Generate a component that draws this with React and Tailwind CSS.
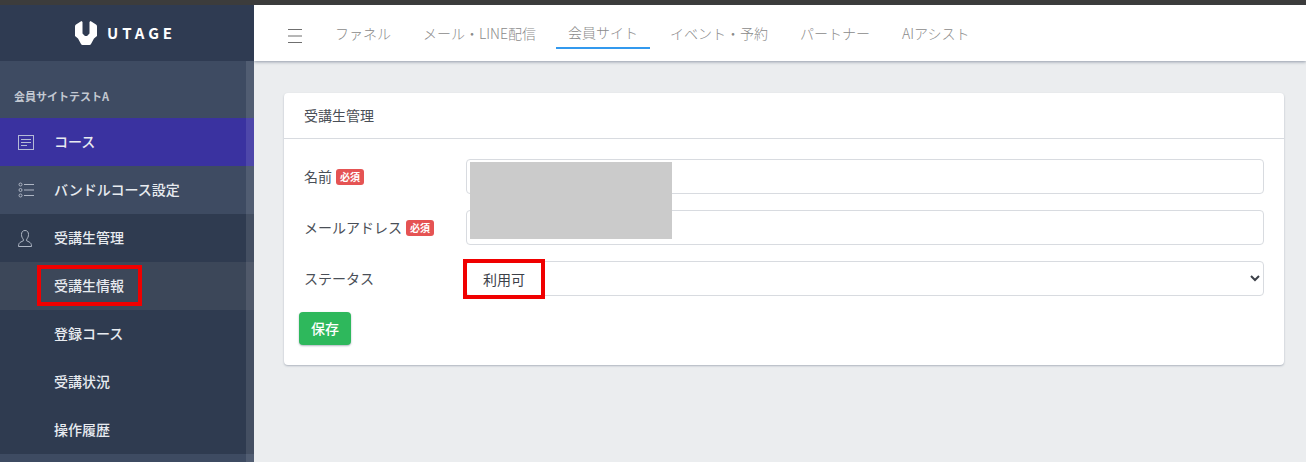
const font = { fontFamily: '"Noto Sans CJK JP", sans-serif' };

function LogoMark() {
  return (
    <svg width="22" height="24" viewBox="0 0 22 24" fill="#ffffff">
      <path d="M6.500 0 L7.500 1 L7.500 12.500 L10 15 L12 15 L14.500 12.500 L14.500 1 L15.500 0 L21 3.500 Q22 4.200 22 5.500 L22 15 L19 17.500 L16 23 Q15.500 24 14.500 24 L7.500 24 Q6.500 24 6 23 L3 17.500 L0 15 L0 5.500 Q0 4.200 1 3.500 Z" />
    </svg>
  );
}

function DocIcon() {
  return (
    <svg width="16" height="15" viewBox="0 0 16 15" fill="none" stroke="#b4bad6" strokeWidth="1">
      <rect x="0.5" y="0.5" width="15" height="14" />
      <path d="M3 4.500h10M3 7.500h10M3 10.500h6" />
    </svg>
  );
}

function ListIcon() {
  return (
    <svg width="16" height="16" viewBox="0 0 16 16" fill="none" stroke="#aeb6c4" strokeWidth="1">
      <circle cx="2.500" cy="2.500" r="1.500" />
      <circle cx="2.500" cy="8" r="1.500" />
      <circle cx="2.500" cy="13.500" r="1.500" />
      <path d="M6 2.500h10M6 8h10M6 13.500h10" />
    </svg>
  );
}

function UserIcon() {
  return (
    <svg width="14" height="17" viewBox="0 0 14 17" fill="none" stroke="#aeb6c4" strokeWidth="1">
      <path d="M7 0.500c-2.400 0-3.500 1.700-3.500 4 0 2 .7 3.600 1.800 4.600v1.800c-1.400.6-3.500 1.400-4.100 2.400-.4.600-.7 1.800-.7 3.200h13c0-1.400-.3-2.600-.7-3.200-.6-1-2.700-1.800-4.100-2.400V9.100c1.100-1 1.800-2.600 1.800-4.600 0-2.300-1.100-4-3.500-4z" />
    </svg>
  );
}

function Hamburger() {
  return (
    <svg width="14" height="14" viewBox="0 0 14 14" stroke="#6f6f6f" strokeWidth="1" className="mt-[5px]">
      <path d="M0 0.500h14M0 7h14M0 13.500h14" />
    </svg>
  );
}

function SideRow({ icon, label, className = "" }) {
  return (
    <div className={`h-12 flex items-center text-[14px] font-medium text-[#e8ebf0] ${className}`}>
      <div className="w-[54px] pl-[18px] flex items-center">{icon}</div>
      <span className="pb-[2px]">{label}</span>
    </div>
  );
}

function Required() {
  return (
    <span className="ml-1 px-[4px] h-4 inline-flex items-center rounded-[3px] bg-[#e55353] text-white text-[10px] font-bold">
      必須
    </span>
  );
}

function FormRow({ label, required, children }) {
  return (
    <div className="flex items-center h-[35px]">
      <div className="w-[162px] text-[14px] text-[#4a4f57] flex items-center">
        {label}
        {required && <Required />}
      </div>
      <div className="flex-1">{children}</div>
    </div>
  );
}

const navItems = ["ファネル", "メール・LINE配信", "会員サイト", "イベント・予約", "パートナー", "AIアシスト"];

export default function App() {
  return (
    <div className="h-[462px] overflow-hidden flex flex-col bg-[#ebedef]" style={font}>
      <div className="h-[5px] bg-[#3c3c3c] shrink-0" />
      <div className="flex flex-1 min-h-0">
        {/* Sidebar */}
        <aside className="w-[254px] shrink-0 relative bg-[#3e4b62] flex flex-col">
          <div className="h-14 shrink-0 bg-[#2f3b52] flex items-center justify-center gap-[10px] pr-[3px]">
            <LogoMark />
            <span className="text-white text-[15px] font-semibold tracking-[0.26em]">UTAGE</span>
          </div>
          <div className="h-[57px] shrink-0 flex items-center pl-[14px] pt-[14px] text-[11px] font-bold text-[#c3c8d1]">
            会員サイトテストA
          </div>
          <SideRow icon={<DocIcon />} label="コース" className="bg-[#3a32a0]" />
          <SideRow icon={<ListIcon />} label="バンドルコース設定" />
          <SideRow icon={<UserIcon />} label="受講生管理" className="bg-[#2f3b50]" />
          <SideRow label="受講生情報" className="bg-[#3c4759]" />
          <SideRow label="登録コース" className="bg-[#2f3b50]" />
          <SideRow label="受講状況" className="bg-[#2f3b50]" />
          <SideRow label="操作履歴" className="bg-[#2f3b50]" />
          {/* scrollbar */}
          <div className="absolute right-0 top-14 bottom-0 w-2 bg-[#ffffff]/10" />
          {/* annotation */}
          <div className="absolute left-[37px] top-[260px] w-[105px] h-[41px] border-4 border-[#f00000]" />
        </aside>

        {/* Main */}
        <div className="flex-1 min-w-0 flex flex-col">
          <header className="h-14 shrink-0 bg-white shadow-[0_1px_3px_rgba(60,75,100,0.5)] flex items-center pl-[34px]">
            <Hamburger />
            <nav className="flex gap-2 ml-[21px]">
              {navItems.map((item) => (
                <div
                  key={item}
                  className={`px-3 h-8 flex items-center text-[14px] font-light text-[#8a8a8a] ${
                    item === "会員サイト" ? "border-b-2 border-[#3399ee]" : ""
                  }`}
                >
                  {item}
                </div>
              ))}
            </nav>
          </header>

          <div className="pt-8 pl-[30px] pr-[22px]">
            <div className="relative h-[272px] bg-white rounded-[4px] shadow-[0_1px_2px_rgba(60,75,100,0.35)]">
              <div className="h-[46px] flex items-center pl-5 border-b border-[#d8dbe0] text-[14px] text-[#4a4f57]">
                受講生管理
              </div>
              <div className="pt-5 pl-5 pr-5 flex flex-col gap-4">
                <FormRow label="名前" required>
                  <input className="w-full h-[35px] border border-[#d8dbe0] rounded-[4px] bg-white" />
                </FormRow>
                <FormRow label="メールアドレス" required>
                  <input className="w-full h-[35px] border border-[#d8dbe0] rounded-[4px] bg-white" />
                </FormRow>
                <FormRow label="ステータス">
                  <select className="w-full h-[35px] border border-[#d8dbe0] rounded-[4px] bg-white pl-3 text-[14px] text-[#3c4048]">
                    <option>利用可</option>
                  </select>
                </FormRow>
              </div>
              <button className="ml-[15px] mt-4 w-[52px] h-[33px] rounded-[4px] bg-[#2eb85c] text-white text-[14px] font-medium shadow-[0_1px_2px_rgba(60,75,100,0.4)]">
                保存
              </button>
              {/* redaction and annotation */}
              <div className="absolute left-[186px] top-[69px] w-[202px] h-[77px] bg-[#cbcbcb]" />
              <div className="absolute left-[179px] top-[166px] w-[82px] h-[40px] border-4 border-[#f00000]" />
            </div>
          </div>
        </div>
      </div>
    </div>
  );
}
